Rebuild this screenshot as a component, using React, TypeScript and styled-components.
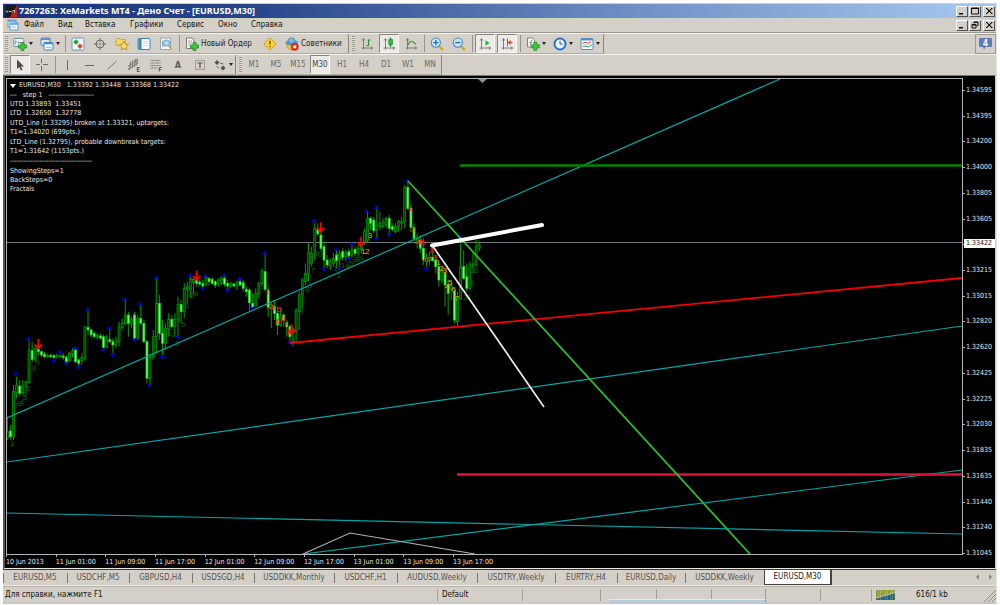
import React from "react";
import styled, { createGlobalStyle } from "styled-components";

const GlobalStyle = createGlobalStyle`
  *, *::before, *::after { box-sizing: border-box; }
  body {
    margin: 0;
    background: #fdfdfd;
    color: #111;
    font-family: "DejaVu Sans Condensed", "DejaVu Sans", sans-serif;
    font-size: 8px;
    line-height: 10px;
  }
  button {
    font: inherit;
    color: inherit;
    background: none;
    border: 0;
    margin: 0;
    padding: 0;
    cursor: default;
    white-space: nowrap;
  }
`;

const Page = styled.div`
  min-height: 100vh;
  padding: 3px 3px 1px;
  display: flex;
`;

const Window = styled.div`
  flex: 1;
  min-width: 0;
  display: flex;
  flex-direction: column;
  background: #d4d0c8;
  border-right: 1px solid #e6e3dc;
`;

const TitleBar = styled.header`
  height: 15px;
  display: flex;
  align-items: center;
  gap: 2px;
  padding: 0 1px 0 2px;
  border-top: 1px solid #c8d0de;
  background: linear-gradient(90deg, #17357c 0%, #26458d 25%, #7394c8 66%, #a6caf0 100%);
`;

const Title = styled.h1`
  flex: 1;
  margin: 0;
  color: #fff;
  font-family: "Noto Sans", sans-serif;
  font-size: 9px;
  line-height: 12px;
  font-weight: bold;
  white-space: nowrap;
`;

const MenuBar = styled.nav`
  height: 15px;
  display: flex;
  align-items: center;
  padding: 0 1px 0 4px;
  border-bottom: 1px solid #9b9891;
`;

const MenuItem = styled.button<{ $width: number }>`
  width: ${(p) => p.$width}px;
  padding-left: 5px;
  text-align: left;
`;

const Spacer = styled.div`
  flex: 1;
`;

const CaptionGroup = styled.div`
  display: flex;
  gap: 1px;
`;

const CaptionButton = styled.button`
  width: 12px;
  height: 11px;
  display: flex;
  align-items: center;
  justify-content: center;
  background: #d4d0c8;
  border: 1px solid;
  border-color: #fff #55534f #55534f #fff;
  &:last-child { margin-left: 1px; }
`;

const ToolRow = styled.div`
  height: 21px;
  display: flex;
  border-top: 1px solid #f4f2ee;
  padding-left: 1px;
`;

const ToolGroup = styled.div`
  display: flex;
  align-items: center;
  border-right: 1px solid #8a8780;
  border-bottom: 1px solid #b1aea6;
  margin-right: 2px;
`;

const Grip = styled.span`
  width: 3px;
  height: 15px;
  margin: 0 1px;
  background: repeating-linear-gradient(180deg, #97948d 0 1px, #e4e1da 1px 2px);
`;

const Divider = styled.span`
  width: 4px;
  height: 17px;
  display: flex;
  justify-content: center;
  &::before {
    content: "";
    width: 1px;
    background: #96938c;
  }
`;

const ToolButton = styled.button<{ $pressed?: boolean }>`
  width: 20px;
  height: 19px;
  margin: 0 1px;
  display: flex;
  align-items: center;
  justify-content: center;
  color: ${(p) => (p.$pressed ? "#444" : "#6a6862")};
  border: 1px solid transparent;
  ${(p) =>
    p.$pressed &&
    `
    background: #eceae6;
    border-color: #8a8780 #f8f8f6 #f8f8f6 #8a8780;
  `}
`;

const SplitButton = styled.button<{ $compact?: boolean }>`
  width: ${(p) => (p.$compact ? 24 : 27)}px;
  height: 19px;
  display: flex;
  align-items: center;
  gap: 2px;
  padding-left: ${(p) => (p.$compact ? 2 : 4)}px;
`;

const LabelButton = styled.button<{ $width: number }>`
  width: ${(p) => p.$width}px;
  height: 19px;
  display: flex;
  align-items: center;
  gap: 2px;
  padding-left: 4px;
  color: #222;
`;

const Caret = styled.span`
  border: 2px solid transparent;
  border-top: 3px solid #222;
  border-bottom: 0;
`;

const ChatButton = styled.button`
  width: 21px;
  height: 20px;
  display: flex;
  align-items: center;
  justify-content: center;
  border: 1px solid #9b9d98;
`;

const ChartFrame = styled.main`
  flex: 1;
  display: grid;
  grid-template-columns: 1fr 32px;
  grid-template-rows: 1fr 13px;
  min-height: 400px;
  padding: 2px 0 0 1px;
  background: #000;
  color: #e8e8e8;
  font-size: 7px;
  line-height: 9px;
  border: 1px solid #77756f;
  border-left: 2px solid #55534f;
  border-right-color: #d4d0c8;
  border-bottom-color: #e8e6e1;
`;

const Plot = styled.section`
  position: relative;
  min-height: 0;
  border: 1px solid #b4b4b4;
`;

const PlotSvg = styled.svg`
  position: absolute;
  inset: 0;
  width: 100%;
  height: 100%;
`;

const Comments = styled.div`
  position: absolute;
  top: 2px;
  left: 3px;
  display: flex;
  flex-direction: column;
  gap: 1px;
  white-space: pre;
`;

const CommentBlock = styled.div``;

const Symbol = styled.div`
  display: flex;
  align-items: center;
  gap: 3px;
`;

const SymbolCaret = styled.span`
  border: 3px solid transparent;
  border-top: 4px solid #fff;
  border-bottom: 0;
`;

const PriceAxis = styled.div`
  position: relative;
  display: flex;
  flex-direction: column;
  justify-content: space-between;
  padding-top: 8px;
  margin-bottom: -3px;
`;

const Price = styled.div`
  height: 9px;
  display: flex;
  align-items: center;
  gap: 1px;
  &::before {
    content: "";
    width: 2px;
    height: 1px;
    background: #b4b4b4;
  }
`;

const CurrentPrice = styled.div`
  position: absolute;
  top: 33.5%;
  left: 1px;
  right: 0;
  padding-left: 2px;
  background: #fff;
  color: #111;
`;

const TimeAxis = styled.div`
  display: grid;
  grid-auto-flow: column;
  grid-auto-columns: 5.19%;
  white-space: nowrap;
`;

const Time = styled.div`
  padding-top: 3px;
  position: relative;
  &::before {
    content: "";
    position: absolute;
    top: 0;
    left: 0;
    width: 1px;
    height: 2px;
    background: #b4b4b4;
  }
`;

const TabBar = styled.nav`
  height: 17px;
  display: flex;
  align-items: flex-start;
  border-top: 1px solid #3a3936;
  border-bottom: 1px solid #eceae5;
`;

const Tab = styled.button<{ $width: number; $active?: boolean }>`
  width: ${(p) => p.$width}px;
  height: 15px;
  color: #55534f;
  position: relative;
  &::before {
    content: "";
    position: absolute;
    left: 0;
    top: 3px;
    width: 1px;
    height: 10px;
    background: #77756f;
  }
  ${(p) =>
    p.$active &&
    `
    background: #fff;
    color: #222;
    border: 1px solid #45433f;
    border-width: 0 2px 1px 1px;
    &::before { display: none; }
  `}
`;

const TabScroll = styled.div`
  height: 15px;
  display: flex;
  align-items: center;
  gap: 8px;
  padding-right: 4px;
`;

const StatusBar = styled.footer`
  position: relative;
  height: 18px;
  display: flex;
  align-items: center;
  border-top: 1px solid #b7b4ac;
  border-bottom: 2px solid #c6c8c8;
`;

const StatusCell = styled.div<{ $width?: number }>`
  ${(p) => (p.$width ? `width: ${p.$width}px; border-left: 1px solid #a09d96; padding-left: 4px;` : "flex: 1; padding-left: 2px;")}
  height: 12px;
  display: flex;
  align-items: center;
  gap: 21px;
  white-space: nowrap;
`;

const PreviewStrip = styled.div`
  position: absolute;
  left: 61%;
  width: 157px;
  bottom: 0;
  height: 3px;
  background: #b3cddc;
  border-top: 1px solid #e9e8e3;
  border-right: 1px solid #8a8780;
`;

const SizeGrip = styled.svg`
  position: absolute;
  right: 0;
  bottom: 0;
`;

/* ---------- icons ---------- */

type IconProps = { children: React.ReactNode };
const Icon = ({ children }: IconProps) => (
  <svg width="14" height="14" viewBox="0 0 14 14" fill="none" aria-hidden="true">
    {children}
  </svg>
);

const Plus = ({ x, y }: { x: number; y: number }) => (
  <path
    d={`M${x - 1.5} ${y - 4}h3v2.5h2.5v3h-2.5v2.5h-3v-2.5h-2.5v-3h2.5z`}
    fill="#3fc63a"
    stroke="#168a16"
    strokeWidth=".7"
  />
);

const NewChartIcon = () => (
  <Icon>
    <rect x=".8" y="1.5" width="10" height="8" rx="1" fill="#e9f2f6" stroke="#5f93ad" />
    <path d="M2.5 7.5V3.5M2.5 5h2M5.5 7.5v-3M5.5 5.5h3" stroke="#6a9fb8" strokeWidth=".8" />
    <Plus x={9.5} y={9.5} />
  </Icon>
);

const ProfilesIcon = () => (
  <Icon>
    <rect x="1" y="1" width="9" height="7.5" rx="1" fill="#d4e6f6" stroke="#4b86c4" />
    <path d="M1 2.2h9" stroke="#4b86c4" strokeWidth="1.4" />
    <rect x="4" y="5.5" width="9" height="7.5" rx="1" fill="#edf5fb" stroke="#4b86c4" />
    <path d="M4 6.5h9" stroke="#4b86c4" strokeWidth="1.4" />
    <path d="M6 10.5h5" stroke="#9cc0e0" />
  </Icon>
);

const MarketIcon = () => (
  <Icon>
    <rect x="1" y="1" width="12" height="12" rx="1.5" fill="#f4f9fc" stroke="#5b9bc8" />
    <path d="M5 2.3l2.8 2.8-2.8 2.6-2.8-2.6z" fill="#28a528" />
    <path d="M9 6.6l2.8 2.6L9 12 6.2 9.2z" fill="#e0452e" />
  </Icon>
);

const NavigatorIcon = () => (
  <Icon>
    <circle cx="7" cy="7" r="4" stroke="#6f6d68" />
    <path d="M7 .8v4.4M7 8.8v4.4M.8 7h4.4M8.8 7h4.4" stroke="#6f6d68" />
    <circle cx="7" cy="7" r="1" fill="#8d8b86" />
  </Icon>
);

const FavoriteIcon = () => (
  <Icon>
    <path d="M1 2.5l1-1h3l1 1h4.5v6H1z" fill="#f3d36c" stroke="#c99a30" strokeWidth=".8" />
    <path d="M9 4.2l1.4 2.9 3.1.4-2.3 2.2.6 3.1L9 11.3l-2.8 1.5.6-3.1-2.3-2.2 3.1-.4z" fill="#fbdc5a" stroke="#b9831d" strokeWidth=".8" />
  </Icon>
);

const TerminalIcon = () => (
  <Icon>
    <rect x="1" y="1.5" width="12" height="11" rx="1" fill="#f4f9fd" stroke="#3f86c6" />
    <path d="M1.5 2h3v10h-3z" fill="#3f7fbe" />
    <path d="M6 4.5h5M6 6.5h5M6 8.5h4" stroke="#bcd3e6" strokeWidth=".7" />
  </Icon>
);

const TesterIcon = () => (
  <Icon>
    <rect x="1.5" y="1" width="10" height="11.5" fill="#eef3f6" stroke="#98a9b5" />
    <path d="M3.5 3.5v6M5 5v5" stroke="#6c8ba4" strokeWidth=".7" />
    <circle cx="7.5" cy="6" r="3" fill="#b8dbf2" stroke="#6a9cc2" />
    <path d="M9.7 8.6l3 3.4" stroke="#d8a532" strokeWidth="1.8" />
  </Icon>
);

const OrderIcon = () => (
  <Icon>
    <path d="M1.5 1h5.5l2 2v8.5h-7.5z" fill="#f6f6f4" stroke="#7c7a75" />
    <path d="M3 4h4M3 6h4M3 8h2.5" stroke="#9a9892" strokeWidth=".8" />
    <Plus x={9.5} y={9.5} />
  </Icon>
);

const WarningIcon = () => (
  <Icon>
    <path d="M7 .8L13.2 7 7 13.2.8 7z" fill="#fbd237" stroke="#c9971c" strokeLinejoin="round" />
    <path d="M7 3.8v3.8M7 8.8v1.5" stroke="#6b4a10" strokeWidth="1.3" />
  </Icon>
);

const ExpertIcon = () => (
  <Icon>
    <path d="M1.5 7C2 11.5 4.5 13 7 13s4-1.5 4.5-6z" fill="#f2c23f" stroke="#b98b24" strokeWidth=".7" />
    <ellipse cx="6.8" cy="5.6" rx="6" ry="2.2" fill="#5aa2d8" stroke="#3577ae" strokeWidth=".7" />
    <ellipse cx="6.6" cy="3.6" rx="3.4" ry="2.7" fill="#79b9e6" stroke="#3577ae" strokeWidth=".7" />
    <circle cx="9.8" cy="9.8" r="3.6" fill="#e0331f" stroke="#a81c10" strokeWidth=".6" />
    <rect x="8.4" y="8.4" width="2.8" height="2.8" fill="#fff" />
  </Icon>
);

const Axes = () => (
  <path d="M3.5 2v10.5M1.5 11h11M3.5 1.5l-1.3 2M3.5 1.5l1.3 2M12.8 11l-2-1.3M12.8 11l-2 1.3" stroke="#74726c" strokeWidth=".9" />
);

const BarsIcon = () => (
  <Icon>
    <Axes />
    <path d="M8.5 2.5v6.5M8.5 3h2M6.5 8.5h2" stroke="#21902a" strokeWidth="1.2" />
  </Icon>
);

const CandlesIcon = () => (
  <Icon>
    <Axes />
    <path d="M8.5 .5v9.5" stroke="#14861c" />
    <rect x="6.8" y="2.2" width="3.6" height="5.8" rx=".6" fill="#2bc036" stroke="#14861c" strokeWidth=".7" />
  </Icon>
);

const LineIcon = () => (
  <Icon>
    <Axes />
    <path d="M4 8c1.5-4.5 4.5-4.5 8-.5" stroke="#21902a" strokeWidth="1.1" />
  </Icon>
);

const ZoomIcon = ({ plus }: { plus?: boolean }) => (
  <Icon>
    <path d="M8.8 8.8l4 4" stroke="#d6a430" strokeWidth="2.4" />
    <circle cx="5.8" cy="5.6" r="4.6" fill="#c5e4f8" stroke="#3f8ac4" strokeWidth="1.1" />
    <path d={plus ? "M3.2 5.6h5.2M5.8 3v5.2" : "M3.2 5.6h5.2"} stroke="#2872b0" strokeWidth="1.4" />
  </Icon>
);

const ScrollIcon = () => (
  <Icon>
    <Axes />
    <path d="M7.5 3.2v5.6l4-2.8z" fill="#2bb036" />
  </Icon>
);

const ShiftIcon = () => (
  <Icon>
    <Axes />
    <path d="M7.5 1.5v8" stroke="#4a6f9c" />
    <path d="M12.5 5.5H9M10.8 3.6L8.6 5.5l2.2 1.9" stroke="#cf4020" strokeWidth="1.1" />
  </Icon>
);

const IndicatorIcon = () => (
  <Icon>
    <path d="M1.5 1h4.8l2.2 2v7h-7z" fill="#f2f2ef" stroke="#85837d" />
    <path d="M4 8.5c.8-1 .6-4.5 2-5.5M3.5 5.5h2.5" stroke="#74726c" strokeWidth=".8" />
    <Plus x={9.3} y={9.3} />
  </Icon>
);

const ClockIcon = () => (
  <Icon>
    <circle cx="7" cy="7" r="5.5" fill="#eaf4fc" stroke="#2c72c2" strokeWidth="2" />
    <path d="M7 3.8V7h2.6" stroke="#27588e" strokeWidth="1" />
  </Icon>
);

const TemplateIcon = () => (
  <Icon>
    <rect x="1" y="1.5" width="12" height="11" rx="1" fill="#f6fafc" stroke="#4f8fc6" />
    <path d="M1 2.5h12" stroke="#4f8fc6" strokeWidth="1.8" />
    <path d="M2.5 6.3l2.5-1 2.5.8 3.5-1.3" stroke="#c05a48" />
    <path d="M2.5 10l2.5-1 3 1 3.5-1.5" stroke="#45a052" />
    <path d="M1.5 7.7h11" stroke="#a9c4d8" strokeWidth=".6" />
  </Icon>
);

const CursorIcon = () => (
  <Icon>
    <path d="M4 1.5v9.5l2.3-2 1.6 3.6 1.6-.8L8 8.4h3z" fill="#4e4c48" />
  </Icon>
);

const GREY = "#6d6b66";

const CrossIcon = () => (
  <Icon>
    <path d="M6.5 1v4M6.5 8v5M1 6.5h4M8 6.5h5" stroke={GREY} />
  </Icon>
);
const VLineIcon = () => (
  <Icon>
    <path d="M6.5 2v10" stroke={GREY} />
  </Icon>
);
const HLineIcon = () => (
  <Icon>
    <path d="M2 7.5h9" stroke={GREY} />
  </Icon>
);
const TrendIcon = () => (
  <Icon>
    <path d="M2.5 11.5l9-8.5" stroke={GREY} strokeWidth=".9" />
  </Icon>
);
const ChannelIcon = () => (
  <Icon>
    <path d="M1 8.5l10-7M1 11.5l10-7M3.5 3.5L2.5 12M6 2L5 10.5M8.5 1l-1 8M10.5 .5l-1 7" stroke={GREY} strokeWidth=".9" />
    <path d="M12.8 9.5h-2.5v4h2.5M10.3 11.5h2" stroke="#3f3d3a" strokeWidth=".8" />
  </Icon>
);
const FiboIcon = () => (
  <Icon>
    <path d="M1.5 2.5h10M1.5 5h10M1.5 7.5h10M1.5 10h7" stroke={GREY} strokeDasharray="1 .6" />
    <path d="M12.8 9.5h-2.5v4M10.3 11.5h2" stroke="#3f3d3a" strokeWidth=".8" />
  </Icon>
);
const LabelIcon = () => (
  <Icon>
    <rect x="2.5" y="2.5" width="9" height="9" stroke={GREY} strokeDasharray="1 1" />
    <path d="M4.5 5h5M7 5v5" stroke="#55534f" strokeWidth="1.2" />
  </Icon>
);
const ArrowsIcon = () => (
  <Icon>
    <path d="M4 2l2.5 2.5L4 7 1.5 4.5z" fill="#55534f" />
    <path d="M10 7.5l2.5 2.5L10 12.5 7.5 10z" fill="#55534f" />
    <path d="M7 5l3.5 1M3.5 8.5L6 10" stroke={GREY} />
  </Icon>
);

const LetterIcon = styled.span`
  color: #5d5b56;
  font-size: 9px;
  font-weight: bold;
`;

const AppLogo = () => (
  <svg width="12" height="12" viewBox="0 0 12 12" aria-hidden="true">
    <rect width="12" height="12" fill="#1a1a1a" />
    <path d="M12 0v12H5z" fill="#c22020" />
    <path d="M1 5.5l2 2M3 5.5l-2 2M4 6.5h2M7 5.5v2M8 5.5h1.5v2" stroke="#eee" strokeWidth=".8" fill="none" />
  </svg>
);

const ChartWindowIcon = () => (
  <svg width="12" height="12" viewBox="0 0 12 12" fill="none" aria-hidden="true">
    <rect x="1" y="1" width="8" height="7" fill="#e9f3fb" stroke="#5f9bd0" />
    <rect x="3" y="4" width="8" height="7" fill="#f4f9fd" stroke="#5f9bd0" />
    <path d="M3 5h8M1 2h8" stroke="#5f9bd0" strokeWidth="1.5" />
    <path d="M4.5 9l1.5-1.5 1.5 1 2-1.5" stroke="#7aa9d0" strokeWidth=".8" />
  </svg>
);

const Glyph = ({ d, fill }: { d: string; fill?: boolean }) => (
  <svg width="8" height="8" viewBox="0 0 8 8" fill={fill ? "#111" : "none"} stroke={fill ? "none" : "#111"} aria-hidden="true">
    <path d={d} />
  </svg>
);

const ChatIcon = () => (
  <svg width="15" height="14" viewBox="0 0 15 14" aria-hidden="true">
    <path d="M2 1h11a1 1 0 0 1 1 1v7a1 1 0 0 1-1 1H7.5L6 12.8 5 10H2a1 1 0 0 1-1-1V2a1 1 0 0 1 1-1z" fill="#5b7dba" />
    <text x="7.5" y="8.5" fill="#fff" fontSize="8" fontWeight="bold" textAnchor="middle">4</text>
  </svg>
);

const TrafficIcon = () => (
  <svg width="19" height="10" viewBox="0 0 19 10" aria-hidden="true">
    {[0, 1, 2, 3, 4, 5, 6, 7].map((i) => (
      <g key={i}>
        <rect x={i * 2.4} y="0" width="2" height="10" fill="#8d9a2c" />
        <rect x={i * 2.4} y={8 - i * 0.7} width="2" height={2 + i * 0.7} fill="#1f6186" />
        <rect x={i * 2.4} y={7.4 - i * 0.7} width="2" height=".8" fill="#dfe3d0" />
      </g>
    ))}
  </svg>
);

/* ---------- chart data ---------- */

// A bar is high, low, body top, body bottom, 1 when it closed higher.
type Bar = [number, number, number, number, 0 | 1];
type Mark = [number, number];
type Count = [string, number, number];

interface Section {
  x: number;
  y: number;
  firstBar: number;
  bars: Bar[];
  peaks: Mark[];
  lows: Mark[];
  signals: Mark[];
  green: Count[];
  red: Count[];
  orange: Count[];
}

// Section values are thirds of a plot unit, measured from the section's own origin.
const SECTIONS: Section[] = [
  {
    x: 0,
    y: 270,
    firstBar: 22,
    bars: [
      [440, 510, 485, 505, 1], [465, 510, 483, 500, 0], [345, 510, 365, 500, 1], [320, 385, 345, 368, 1],
      [330, 380, 348, 370, 0], [330, 375, 348, 368, 1], [332, 375, 335, 348, 1], [210, 340, 240, 338, 1],
      [215, 275, 242, 268, 0], [230, 275, 235, 268, 1], [225, 255, 238, 245, 0], [240, 262, 245, 255, 0],
      [245, 265, 253, 260, 0], [250, 264, 256, 260, 1], [250, 264, 256, 260, 0], [252, 268, 257, 262, 0],
      [250, 265, 257, 261, 1], [252, 264, 257, 260, 1], [250, 270, 258, 262, 0], [255, 280, 262, 275, 0],
      [245, 275, 250, 272, 1], [235, 262, 243, 250, 1], [238, 280, 240, 275, 0], [265, 290, 270, 280, 0],
      [250, 285, 262, 272, 1], [168, 272, 170, 265, 1], [120, 195, 172, 180, 0], [175, 205, 180, 195, 0],
      [185, 205, 190, 200, 0], [190, 210, 195, 202, 1], [190, 210, 198, 204, 0], [195, 235, 200, 232, 0],
      [195, 235, 210, 232, 1], [175, 220, 208, 215, 0], [205, 250, 215, 225, 0], [200, 235, 210, 225, 1],
      [155, 230, 168, 215, 1], [145, 180, 160, 172, 1], [88, 165, 135, 162, 1], [125, 200, 135, 160, 0],
      [140, 175, 148, 160, 1], [125, 210, 135, 205, 0], [135, 210, 145, 205, 1], [105, 165, 145, 160, 0],
      [150, 220, 160, 215, 0], [210, 340, 215, 325, 0], [250, 345, 262, 325, 1], [180, 270, 200, 262, 1],
      [25, 250, 100, 200, 1], [75, 210, 100, 190, 0], [150, 255, 190, 220, 0], [160, 240, 175, 220, 1],
      [130, 200, 148, 178, 1], [135, 175, 148, 170, 0], [130, 200, 148, 170, 1], [80, 200, 103, 150, 1],
      [90, 155, 103, 125, 0], [40, 145, 55, 125, 1], [35, 100, 50, 60, 1], [20, 85, 28, 60, 1],
      [20, 70, 28, 38, 1], [25, 50, 30, 40, 0], [30, 50, 36, 42, 0], [30, 55, 40, 48, 0],
      [20, 50, 22, 45, 1], [22, 45, 25, 35, 0], [22, 45, 28, 40, 0], [30, 55, 35, 45, 0],
      [25, 50, 30, 40, 1], [20, 45, 24, 40, 1], [18, 50, 25, 42, 0], [30, 60, 40, 48, 0],
      [35, 55, 42, 48, 1], [38, 52, 42, 48, 0], [32, 60, 36, 48, 1], [25, 50, 35, 45, 0],
      [30, 65, 38, 55, 0], [50, 80, 58, 65, 0], [55, 125, 60, 98, 0],
    ],
    peaks: [[48, 310], [85, 205], [180, 245], [225, 233], [263, 117], [328, 173], [374, 87], [421, 103], [468, 22], [570, 15], [617, 17], [672, 15], [718, 25]],
    lows: [[161, 275], [198, 282], [236, 293], [310, 240], [338, 256], [403, 210], [449, 348], [487, 262], [534, 203], [608, 57], [683, 62]],
    signals: [[115, 222], [590, 17]],
    green: [["1", 37, 520], ["2", 48, 405], ["3", 57, 400], ["4", 66, 396], ["5", 75, 380], ["6", 84, 355], ["8", 103, 295], ["9", 113, 275], ["1", 508, 190], ["2", 520, 192], ["3", 532, 220], ["4", 540, 150], ["5", 550, 163], ["6", 560, 105], ["7", 567, 72], ["8", 577, 72], ["9", 587, 68]],
    red: [],
    orange: [],
  },
  {
    x: 230,
    y: 170,
    firstBar: 68,
    bars: [
      [370, 415, 400, 412, 0], [355, 410, 370, 408, 1], [335, 385, 340, 372, 1], [295, 350, 302, 340, 1],
      [250, 365, 305, 358, 0], [350, 440, 362, 412, 0], [395, 475, 405, 415, 1], [390, 450, 410, 430, 0],
      [410, 495, 430, 465, 0], [415, 470, 440, 465, 1], [430, 470, 435, 450, 0], [450, 500, 458, 470, 0],
      [465, 520, 470, 500, 0], [475, 530, 485, 515, 1], [415, 515, 420, 485, 1], [365, 480, 375, 425, 1],
      [325, 415, 330, 375, 1], [280, 345, 310, 335, 1], [220, 335, 248, 310, 1], [230, 290, 250, 280, 1],
      [158, 270, 175, 250, 1], [160, 200, 178, 192, 0], [165, 245, 195, 235, 0], [215, 295, 230, 270, 0],
      [255, 295, 270, 285, 0], [265, 300, 275, 288, 1], [250, 290, 265, 280, 1], [240, 295, 255, 272, 0],
      [240, 290, 252, 270, 1], [235, 270, 245, 262, 0], [240, 275, 248, 260, 1], [235, 268, 245, 258, 0],
      [225, 265, 240, 255, 1], [230, 260, 238, 250, 0], [225, 260, 235, 250, 1], [215, 250, 228, 240, 1],
      [175, 225, 185, 215, 1], [125, 220, 145, 212, 1], [140, 180, 145, 160, 0], [140, 190, 150, 182, 0],
      [115, 205, 165, 180, 1], [125, 180, 160, 170, 1], [145, 175, 155, 170, 1], [140, 175, 145, 165, 1],
      [135, 195, 145, 175, 0], [160, 185, 170, 178, 0], [160, 190, 170, 185, 1], [150, 185, 155, 170, 1],
      [140, 180, 155, 160, 1], [45, 175, 52, 155, 1], [35, 120, 52, 115, 0], [100, 185, 115, 172, 0],
      [160, 215, 172, 205, 0], [190, 235, 205, 215, 1], [195, 250, 210, 235, 0], [205, 285, 235, 270, 0],
      [250, 290, 265, 275, 1], [245, 285, 262, 272, 1], [230, 275, 262, 272, 0], [255, 310, 270, 290, 0],
      [275, 350, 290, 330, 0], [290, 340, 300, 330, 1], [295, 410, 310, 345, 0], [330, 435, 345, 370, 0],
      [335, 390, 345, 360, 1], [355, 460, 365, 450, 0], [365, 470, 380, 455, 1], [205, 390, 290, 385, 1],
      [240, 330, 290, 325, 0], [280, 365, 320, 355, 0], [275, 360, 285, 355, 1], [250, 310, 282, 290, 1],
      [210, 290, 230, 285, 1], [212, 245, 225, 235, 1],
    ],
    peaks: [[29, 326], [103, 248], [252, 150], [318, 238], [365, 222], [410, 123], [439, 112], [531, 32], [609, 224], [692, 200]],
    lows: [[67, 415], [180, 520], [282, 300], [328, 297], [357, 268], [439, 207], [477, 195], [589, 298], [681, 470]],
    signals: [[185, 478], [272, 172], [393, 215]],
    green: [["2", 205, 472], ["3", 214, 422], ["8", 232, 357], ["9", 241, 345], ["7", 250, 300], ["8", 260, 250], ["9", 270, 252], ["1", 317, 295], ["2", 327, 315], ["3", 337, 285], ["4", 352, 284], ["5", 363, 279], ["7", 373, 273], ["8", 383, 268], ["9", 392, 263], ["6", 737, 300], ["5", 726, 335], ["4", 716, 378], ["3", 706, 380], ["1", 689, 410]],
    red: [["1", 113, 362], ["2", 122, 408], ["3", 131, 410], ["4", 141, 452], ["5", 149, 418], ["6", 159, 445], ["7", 168, 465], ["8", 177, 485], ["9", 186, 478], ["1", 541, 115], ["2", 550, 177], ["3", 560, 212], ["4", 569, 212], ["5", 578, 215], ["6", 588, 268], ["7", 597, 266], ["8", 606, 240], ["9", 616, 262]],
    orange: [["1", 400, 242], ["2", 412, 243], ["3", 420, 195], ["1", 625, 275], ["2", 635, 295], ["3", 645, 301], ["4", 651, 348], ["5", 661, 335], ["6", 671, 357], ["7", 680, 385]],
  },
];

const BAR_STEP = 9.31;

const Counts = ({ items, color }: { items: Count[]; color: string }) => (
  <g fill={color} fontSize="24" textAnchor="middle" fontFamily="Liberation Sans, sans-serif">
    {items.map(([n, x, y], i) => (
      <text key={i} x={x} y={y + 9}>{n}</text>
    ))}
  </g>
);

const PriceSection = ({ s }: { s: Section }) => (
  <g transform={`translate(${s.x} ${s.y}) scale(.33333)`}>
    {s.bars.map(([high, low, top, bottom, up], i) => {
      const x = s.firstBar + i * BAR_STEP;
      return (
        <g key={i}>
          <path d={`M${x} ${high}V${low}`} stroke="#00a800" strokeWidth="2.8" />
          <rect
            x={x - 3}
            y={top}
            width="6"
            height={bottom - top}
            fill={up ? "#003c00" : "#6dff6d"}
            stroke={up ? "#009c00" : "#1ed01e"}
            strokeWidth="2.2"
          />
        </g>
      );
    })}
    <Counts items={s.green} color="#006800" />
    <Counts items={s.red} color="#ff2000" />
    <Counts items={s.orange} color="#ffa000" />
    <g stroke="#0000e6" strokeWidth="3.6" fill="none">
      {s.peaks.map(([x, y], i) => (
        <path key={i} d={`M${x - 6} ${y + 6}l6-9l6 9M${x - 3} ${y + 2}h6`} />
      ))}
      {s.lows.map(([x, y], i) => (
        <path key={i} d={`M${x - 6} ${y - 6}l6 9l6-9M${x - 3} ${y - 2}h6`} />
      ))}
    </g>
    <g stroke="#ff0000" strokeWidth="5" fill="none">
      {s.signals.map(([x, y], i) => (
        <path key={i} d={`M${x} ${y - 15}v28M${x - 11} ${y + 1}l11 12l11-12`} />
      ))}
    </g>
  </g>
);

const CYAN = "#00a6a6";

const Chart = () => (
  <PlotSvg viewBox="7 79 955 475" preserveAspectRatio="none" fill="none" role="img" aria-label="EURUSD M30">
    <path d="M7 242.5H962" stroke="#707a84" />
    {SECTIONS.map((s) => (
      <PriceSection key={s.x} s={s} />
    ))}
    <g stroke={CYAN} strokeWidth="1.2">
      <path d="M7 418L780 79" />
      <path d="M7 462L962 326" />
      <path d="M303 554L962 470" />
      <path d="M7 513L962 534" />
    </g>
    <path d="M303 554L350 533L475 554" stroke="#b0b0b0" strokeWidth="1.1" />
    <path d="M460 165.5H962" stroke="#008400" strokeWidth="2.4" />
    <path d="M457 474.5H962" stroke="#dc143c" strokeWidth="2.4" />
    <path d="M290 343L962 278" stroke="#f00000" strokeWidth="1.8" />
    <path d="M408 181L750 554" stroke="#2fc22f" strokeWidth="1.7" />
    <path d="M432 245L544 407" stroke="#eee" strokeWidth="1.7" />
    <path d="M432 245.5L542 225" stroke="#fff" strokeWidth="4" strokeLinecap="round" />
    <path d="M478 79h9l-4.5 4z" fill="#909090" />
  </PlotSvg>
);

const PRICES = [
  "1.34595", "1.34395", "1.34200", "1.34000", "1.33805", "1.33605", "", "1.33215", "1.33015", "1.32820",
  "1.32620", "1.32425", "1.32225", "1.32030", "1.31835", "1.31635", "1.31440", "1.31240", "1.31045",
];

const TIMES = [
  "10 Jun 2013", "11 Jun 01:00", "11 Jun 09:00", "11 Jun 17:00", "12 Jun 01:00",
  "12 Jun 09:00", "12 Jun 17:00", "13 Jun 01:00", "13 Jun 09:00", "13 Jun 17:00",
];

const COMMENTS = [
  ["---   step 1   --------------------", "UTD 1.33893  1.33451", "LTD  1.32650  1.32778"],
  ["UTD_Line (1.33295) broken at 1.33321, uptargets:", "T1=1.34020 (699pts.)"],
  ["LTD_Line (1.32795), probable downbreak targets:", "T1=1.31642 (1153pts.)"],
  ["------------------------------------"],
  ["ShowingSteps=1", "BackSteps=0", "Fractals"],
];

const MENU: [string, number][] = [
  ["Файл", 34], ["Вид", 27], ["Вставка", 45], ["Графики", 47], ["Сервис", 41], ["Окно", 33], ["Справка", 40],
];

const TABS: [string, number][] = [
  ["EURUSD,M5", 64], ["USDCHF,M5", 62], ["GBPUSD,H4", 63], ["USDSGD,H4", 62], ["USDDKK,Monthly", 80],
  ["USDCHF,H1", 63], ["AUDUSD,Weekly", 80], ["USDTRY,Weekly", 78], ["EURTRY,H4", 62], ["EURUSD,Daily", 68],
  ["USDDKK,Weekly", 79], ["EURUSD,M30", 68],
];

const PERIODS = ["M1", "M5", "M15", "M30", "H1", "H4", "D1", "W1", "MN"];

const WindowButtons = ({ restore }: { restore?: boolean }) => (
  <CaptionGroup>
    <CaptionButton aria-label="Minimize"><Glyph fill d="M1 6h4v1.5H1z" /></CaptionButton>
    <CaptionButton aria-label={restore ? "Restore" : "Maximize"}>
      <Glyph d={restore ? "M3 2.5V1h4v3.5H5.5M1 3.5h4V7H1zM3 1.2h4M1 4h4" : "M.5 1h7v6h-7zM.5 1.5h7"} />
    </CaptionButton>
    <CaptionButton aria-label="Close"><Glyph d="M1 1l6 6M7 1L1 7M1.5 1l6 6M7.5 1l-6 6" /></CaptionButton>
  </CaptionGroup>
);

const Tool = ({ label, pressed, children }: { label: string; pressed?: boolean; children: React.ReactNode }) => (
  <ToolButton aria-label={label} $pressed={pressed}>{children}</ToolButton>
);

const Split = ({ label, compact, children }: { label: string; compact?: boolean; children: React.ReactNode }) => (
  <SplitButton aria-label={label} $compact={compact}>
    {children}
    <Caret />
  </SplitButton>
);

export default function App() {
  return (
    <Page>
      <GlobalStyle />
      <Window>
        <TitleBar>
          <AppLogo />
          <Title>7267263: XeMarkets MT4 - Дено Счет - [EURUSD,M30]</Title>
          <WindowButtons />
        </TitleBar>

        <MenuBar>
          <ChartWindowIcon />
          {MENU.map(([name, width]) => (
            <MenuItem key={name} $width={width}>{name}</MenuItem>
          ))}
          <Spacer />
          <WindowButtons restore />
        </MenuBar>

        <ToolRow>
          <ToolGroup>
            <Grip />
            <Split label="New chart"><NewChartIcon /></Split>
            <Split label="Profiles"><ProfilesIcon /></Split>
            <Divider />
            <Tool label="Market watch"><MarketIcon /></Tool>
            <Tool label="Data window"><NavigatorIcon /></Tool>
            <Tool label="Navigator"><FavoriteIcon /></Tool>
            <Tool label="Terminal"><TerminalIcon /></Tool>
            <Tool label="Strategy tester"><TesterIcon /></Tool>
            <Divider />
            <LabelButton $width={78}><OrderIcon />Новый Ордер</LabelButton>
            <Tool label="MetaEditor"><WarningIcon /></Tool>
            <LabelButton $width={67}><ExpertIcon />Советники</LabelButton>
          </ToolGroup>
          <ToolGroup>
            <Grip />
            <Tool label="Bar chart"><BarsIcon /></Tool>
            <Tool label="Candlesticks" pressed><CandlesIcon /></Tool>
            <Tool label="Line chart"><LineIcon /></Tool>
            <Divider />
            <Tool label="Zoom in"><ZoomIcon plus /></Tool>
            <Tool label="Zoom out"><ZoomIcon /></Tool>
            <Divider />
            <Tool label="Auto scroll" pressed><ScrollIcon /></Tool>
            <Tool label="Chart shift" pressed><ShiftIcon /></Tool>
            <Divider />
            <Split label="Indicators"><IndicatorIcon /></Split>
            <Split label="Periods"><ClockIcon /></Split>
            <Split label="Templates"><TemplateIcon /></Split>
          </ToolGroup>
          <Spacer />
          <ChatButton aria-label="Messages"><ChatIcon /></ChatButton>
        </ToolRow>

        <ToolRow>
          <ToolGroup>
            <Grip />
            <Tool label="Cursor" pressed><CursorIcon /></Tool>
            <Tool label="Crosshair"><CrossIcon /></Tool>
            <Divider />
            <Tool label="Vertical line"><VLineIcon /></Tool>
            <Tool label="Horizontal line"><HLineIcon /></Tool>
            <Tool label="Trendline"><TrendIcon /></Tool>
            <Tool label="Equidistant channel"><ChannelIcon /></Tool>
            <Tool label="Fibonacci"><FiboIcon /></Tool>
            <Tool label="Text"><LetterIcon>A</LetterIcon></Tool>
            <Tool label="Text label"><LabelIcon /></Tool>
            <Split label="Arrows" compact><ArrowsIcon /></Split>
          </ToolGroup>
          <ToolGroup>
            <Grip />
            {PERIODS.map((p) => (
              <ToolButton key={p} $pressed={p === "M30"}>{p}</ToolButton>
            ))}
          </ToolGroup>
        </ToolRow>

        <ChartFrame>
          <Plot>
            <Chart />
            <Comments>
              <Symbol><SymbolCaret />EURUSD,M30   1.33392 1.33448  1.33368 1.33422</Symbol>
              {COMMENTS.map((lines) => (
                <CommentBlock key={lines[0]}>{lines.join("\n")}</CommentBlock>
              ))}
            </Comments>
          </Plot>
          <PriceAxis>
            {PRICES.map((p, i) => (
              <Price key={i}>{p}</Price>
            ))}
            <CurrentPrice>1.33422</CurrentPrice>
          </PriceAxis>
          <TimeAxis>
            {TIMES.map((t) => (
              <Time key={t}>{t}</Time>
            ))}
          </TimeAxis>
        </ChartFrame>

        <TabBar>
          {TABS.map(([name, width]) => (
            <Tab key={name} $width={width} $active={name === "EURUSD,M30"}>{name}</Tab>
          ))}
          <Spacer />
          <TabScroll>
            <button aria-label="Previous tabs"><svg width="4" height="6" viewBox="0 0 4 6"><path d="M3 0v6L0 3z" fill="#8a8780" /></svg></button>
            <button aria-label="Next tabs"><svg width="4" height="6" viewBox="0 0 4 6"><path d="M1 0v6l3-3z" fill="#8a8780" /></svg></button>
          </TabScroll>
        </TabBar>

        <StatusBar>
          <StatusCell>Для справки, нажмите F1</StatusCell>
          <StatusCell $width={85}>Default</StatusCell>
          <StatusCell $width={78} />
          <StatusCell $width={56} />
          <StatusCell $width={55} />
          <StatusCell $width={54} />
          <StatusCell $width={55} />
          <StatusCell $width={51} />
          <StatusCell $width={125}><TrafficIcon />616/1 kb</StatusCell>
          <PreviewStrip />
          <SizeGrip width="12" height="12" viewBox="0 0 12 12">
            <path d="M0 12L12 0M4 12l8-8M8 12l4-4" stroke="#8a8780" />
          </SizeGrip>
        </StatusBar>
      </Window>
    </Page>
  );
}
